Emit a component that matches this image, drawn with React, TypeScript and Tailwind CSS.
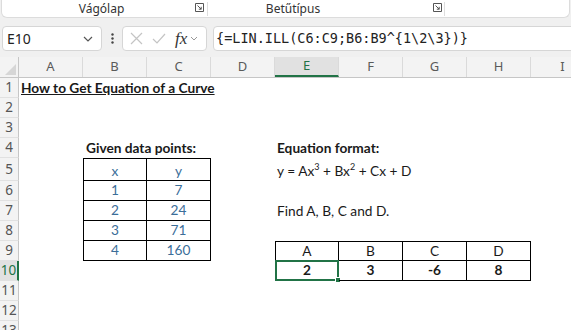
import React from "react";

const COLS = ["A", "B", "C", "D", "E", "F", "G", "H", "I"];
const ROW_H: Record<number, number> = { 5: 23 };

type Cell = {
  text?: React.ReactNode;
  cls?: string;
  border?: string;
  sel?: boolean;
};

const TB = "border-black";

function buildCells(): Record<string, Cell> {
  const c: Record<string, Cell> = {};
  c["A1"] = { text: "How to Get Equation of a Curve", cls: "font-bold underline whitespace-nowrap pl-[2px]" };
  c["B4"] = { text: "Given data points:", cls: "font-bold whitespace-nowrap pl-[3px]" };
  c["E4"] = { text: "Equation format:", cls: "font-bold whitespace-nowrap pl-[2px]" };
  c["E5"] = {
    text: (
      <span>
        y = Ax<sup className="text-[9px] relative -top-[6px]">3</sup> + Bx<sup className="text-[9px] relative -top-[6px]">2</sup> + Cx + D
      </span>
    ),
    cls: "whitespace-nowrap pl-[2px] pt-[3px]",
  };
  c["E7"] = { text: "Find A, B, C and D.", cls: "whitespace-nowrap pl-[2px]" };
  const data = [
    ["x", "y"],
    ["1", "7"],
    ["2", "24"],
    ["3", "71"],
    ["4", "160"],
  ];
  data.forEach((r, i) => {
    const row = 5 + i;
    c["B" + row] = {
      text: r[0],
      cls: "justify-center text-[#3b6e99]",
      border: `border-r border-b border-l ${i === 0 ? "border-t pt-[3px]" : ""}`,
    };
    c["C" + row] = {
      text: r[1],
      cls: "justify-center text-[#3b6e99]",
      border: `border-r border-b ${i === 0 ? "border-t pt-[3px]" : ""}`,
    };
  });
  const hdr = ["A", "B", "C", "D"];
  const vals = ["2", "3", "-6", "8"];
  ["E", "F", "G", "H"].forEach((col, i) => {
    c[col + "9"] = {
      text: hdr[i],
      cls: "justify-center",
      border: `border-r border-b border-t ${i === 0 ? "border-l" : ""}`,
    };
    c[col + "10"] = {
      text: vals[i],
      cls: "justify-center font-bold",
      border: `border-r border-b ${i === 0 ? "border-l" : ""}`,
      sel: i === 0,
    };
  });
  return c;
}

function Launcher() {
  return (
    <svg width="9" height="9" viewBox="0 0 9 9" className="text-[#555]">
      <path d="M0.5 0.5 H8.5 V8.5 H0.5 Z" fill="none" stroke="currentColor" strokeWidth="1" />
      <path d="M2.5 2.5 L6.2 6.2 M3.8 6.2 H6.2 V3.8" fill="none" stroke="currentColor" strokeWidth="1" />
    </svg>
  );
}

export default function App() {
  const cells = buildCells();
  const rows = Array.from({ length: 13 }, (_, i) => i + 1);
  const cellFont = { fontFamily: "Lato, 'Open Sans', sans-serif" };
  return (
    <div className="w-[571px] h-[330px] overflow-hidden bg-[#f0f0f0] relative" style={{ fontFamily: "'Noto Sans', 'Open Sans', sans-serif" }}>
      {/* Ribbon bottom */}
      <div className="h-[18px] bg-white rounded-b-[6px] border-b border-x border-[#dcdcdc] mx-[1px] flex items-center text-[12px] text-[#333]">
        <div className="w-[205px] shrink-0 relative flex items-center justify-center h-full pr-[6px]">
          <span className="leading-none">Vágólap</span>
          <div className="absolute right-[3px] top-[3px]"><Launcher /></div>
        </div>
        <div className="w-px h-[14px] bg-[#dedede]" />
        <div className="w-[236px] shrink-0 relative flex items-center justify-center h-full pr-[66px]">
          <span className="leading-none">Betűtípus</span>
          <div className="absolute right-[2px] top-[3px]"><Launcher /></div>
        </div>
        <div className="w-px h-[14px] bg-[#dedede]" />
      </div>

      {/* Formula bar */}
      <div className="flex items-center h-[25px] mt-[8px] pl-[2px]">
        <div className="w-[100px] shrink-0 h-[25px] bg-white border border-[#d6d6d6] rounded-[4px] flex items-center justify-between pl-[4px] pr-[8px]">
          <span className="text-[14px] text-[#222]">E10</span>
          <svg width="10" height="6" viewBox="0 0 10 6"><path d="M1 1 L5 5 L9 1" fill="none" stroke="#555" strokeWidth="1.2" /></svg>
        </div>
        <div className="w-[20px] shrink-0 flex justify-center text-[#444]">
          <svg width="3" height="11" viewBox="0 0 3 11"><circle cx="1.5" cy="1.5" r="1.2" fill="#444" /><circle cx="1.5" cy="5.5" r="1.2" fill="#444" /><circle cx="1.5" cy="9.5" r="1.2" fill="#444" /></svg>
        </div>
        <div className="w-[85px] shrink-0 h-[25px] bg-white border border-[#d6d6d6] rounded-[4px] flex items-center pl-[7px] gap-[9px]">
          <svg width="13" height="13" viewBox="0 0 13 13"><path d="M1 1 L12 12 M12 1 L1 12" stroke="#c4c4c4" strokeWidth="1.2" /></svg>
          <svg width="14" height="11" viewBox="0 0 14 11"><path d="M1 6 L5 10 L13 1" fill="none" stroke="#c4c4c4" strokeWidth="1.2" /></svg>
          <span className="flex items-center gap-[3px]">
            <span className="italic text-[17px] text-[#333] leading-none" style={{ fontFamily: "'Liberation Serif', 'DejaVu Serif', serif" }}>fx</span>
            <svg width="8" height="5" viewBox="0 0 8 5"><path d="M1 1 L4 4 L7 1" fill="none" stroke="#999" strokeWidth="1" /></svg>
          </span>
        </div>
        <div className="ml-[6px] flex-1 h-[25px] bg-white border border-[#d6d6d6] rounded-l-[4px] flex items-center pl-[2px] mr-[-4px]">
          <span className="text-[13.5px] text-[#222] whitespace-nowrap" style={{ fontFamily: "'DejaVu Sans Mono', 'Liberation Mono', monospace" }}>
            {"{=LIN.ILL(C6:C9;B6:B9^{1\\2\\3})}"}
          </span>
        </div>
      </div>

      {/* Sheet */}
      <div className="mt-[6px]">
        {/* Column headers */}
        <div className="flex h-[21px] border-b border-[#c6c6c6] bg-[#f3f3f3]">
          <div className="w-[19px] shrink-0 h-full relative border-r border-[#c6c6c6]">
            <svg className="absolute right-[2px] bottom-[2px]" width="11" height="11" viewBox="0 0 11 11"><path d="M11 0 L11 11 L0 11 Z" fill="#d6d6d6" /></svg>
          </div>
          {COLS.map((c) => (
            <div
              key={c}
              className={`w-[64px] shrink-0 h-full flex items-center justify-center text-[13px] border-r border-[#dadada] ${
                c === "E" ? "bg-[#e1e1e1] text-[#217346] border-b-2 border-b-[#217346]" : "text-[#5a5a5a]"
              }`}
            >
              {c}
            </div>
          ))}
        </div>
        {rows.map((r) => (
          <div key={r} className="flex bg-white" style={{ height: ROW_H[r] ?? 20 }}>
            <div
              className={`w-[19px] shrink-0 h-full flex items-center justify-center text-[13.5px] border-b border-[#e1e1e1] ${
                r === 10 ? "bg-[#e1e1e1] text-[#217346] border-r-2 border-r-[#217346]" : "bg-[#f3f3f3] text-[#555] border-r border-r-[#c6c6c6]"
              }`}
            >
              {r}
            </div>
            {COLS.map((col) => {
              const cell = cells[col + r];
              return (
                <div
                  key={col}
                  className={`w-[64px] shrink-0 h-full flex items-center relative text-[13.7px] text-[#1a1a1a] ${cell?.border ? cell.border + " " + TB : ""} ${cell?.cls ?? ""}`}
                  style={cellFont}
                >
                  {cell?.text}
                  {cell?.sel && (
                    <div className="absolute -left-[1px] -top-[1px] -right-[1px] -bottom-[1px] border-2 border-[#217346] pointer-events-none">
                      <div className="absolute -right-[4px] -bottom-[4px] w-[6px] h-[6px] bg-[#217346] border border-white" />
                    </div>
                  )}
                </div>
              );
            })}
          </div>
        ))}
      </div>
    </div>
  );
}
